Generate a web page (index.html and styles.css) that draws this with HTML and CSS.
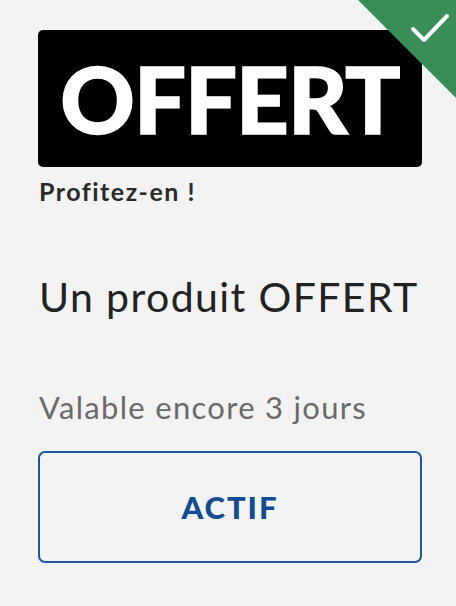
FILE: index.html
```html
<!DOCTYPE html>
<html lang="fr">
<head>
    <meta charset="UTF-8">
    <meta name="viewport" content="width=device-width, initial-scale=1.0">
    <title>Coupon</title>
    <link rel="stylesheet" href="styles.css">
</head>
<body>
    <div class="coupon">
        <div class="corner">
            <svg class="check" viewBox="0 0 40 30" width="40" height="30">
                <path d="M3 16 L14 27 L37 3" fill="none" stroke="#fff" stroke-width="4" stroke-linecap="round" stroke-linejoin="round"/>
            </svg>
        </div>
        <div class="banner">OFFERT</div>
        <p class="tagline">Profitez-en !</p>
        <h1 class="title">Un produit OFFERT</h1>
        <p class="validity">Valable encore 3 jours</p>
        <button class="state" type="button">ACTIF</button>
    </div>
</body>
</html>
```

FILE: styles.css
```css
body {
    margin: 0;
    background-color: #f3f3f3;
    font-family: Lato, "Open Sans", sans-serif;
    color: #222;
    overflow: hidden;
}
.coupon {
    position: relative;
    height: 606px;
    padding: 30px 34px 0 38px;
    box-sizing: border-box;
    display: flex;
    flex-direction: column;
}
.corner {
    position: absolute;
    top: 0;
    right: 0;
    width: 98px;
    height: 98px;
    background: #388e56;
    clip-path: polygon(0 0, 100% 0, 100% 100%);
}
.check {
    position: absolute;
    top: 13px;
    right: 6px;
}
.banner {
    height: 137px;
    background: #000;
    border-radius: 5px;
    color: #fff;
    font-weight: 900;
    font-size: 92px;
    line-height: 137px;
    text-align: center;
    letter-spacing: -1px;
    -webkit-text-stroke: 1.5px #fff;
}
.tagline {
    margin: 9px 0 0 1px;
    font-size: 25px;
    line-height: 30px;
    font-weight: 700;
    letter-spacing: 1.5px;
    color: #2a2a2a;
}
.title {
    margin: 66px 0 0 1px;
    font-size: 41px;
    line-height: 49px;
    font-weight: 400;
    letter-spacing: 1.4px;
    color: #222;
}
.validity {
    margin: 68px 0 0 1px;
    font-size: 31px;
    line-height: 37px;
    letter-spacing: 1.3px;
    color: #6a6a6a;
}
.state {
    margin-top: 25px;
    height: 112px;
    border: 2px solid #1d5797;
    border-radius: 7px;
    background: transparent;
    color: #0f4c92;
    font-family: inherit;
    font-size: 31px;
    font-weight: 900;
    letter-spacing: 2px;
}
```
